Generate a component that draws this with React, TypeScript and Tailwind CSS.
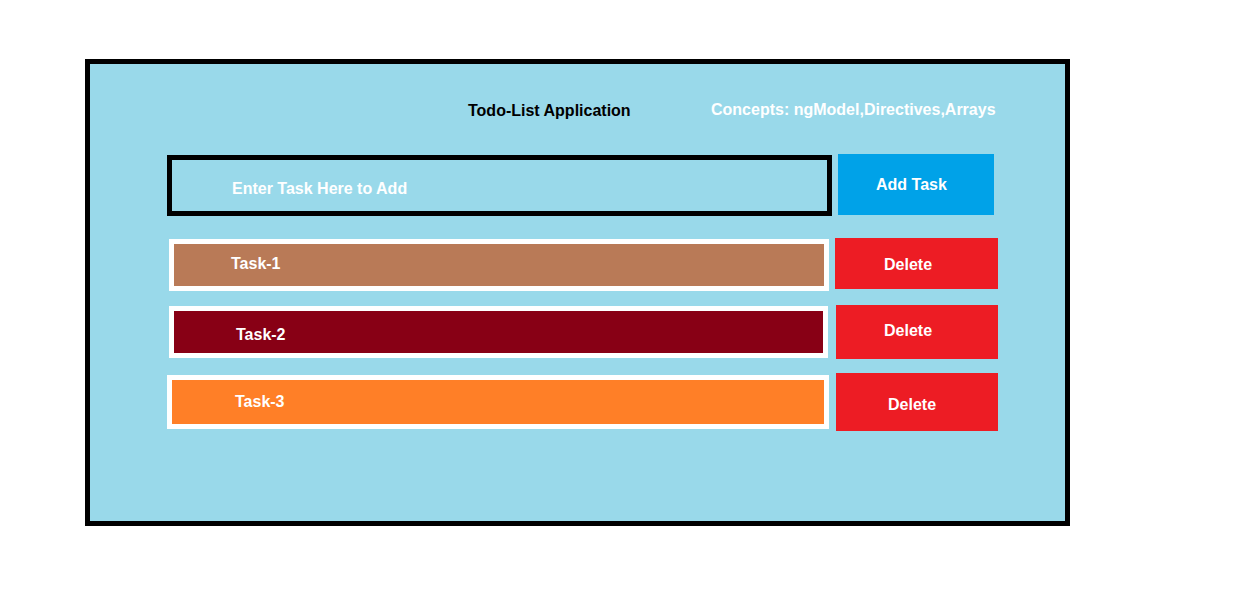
import React from "react";

const font = { fontFamily: '"Liberation Sans", Arial, sans-serif' };

export default function App() {
  return (
    <div className="w-[1252px] h-[608px] bg-white pt-[59px] pl-[85px]" style={font}>
      <div className="w-[985px] h-[467px] border-[5px] border-black bg-[#99D9EA] flex flex-col">
        {/* Header */}
        <div className="mt-[37px] flex items-start h-[18px] text-[16px] leading-[18px] font-bold">
          <span className="ml-[378px] w-[243px] pt-px text-black">Todo-List Application</span>
          <span className="text-white">Concepts: ngModel,Directives,Arrays</span>
        </div>

        {/* Input row */}
        <div className="mt-[35px] flex items-start text-[16px] leading-[18px] font-bold text-white">
          <div className="ml-[77px] mt-px w-[665px] h-[61px] border-[5px] border-black pl-[60px] pt-[20px]">
            Enter Task Here to Add
          </div>
          <button className="ml-[6px] w-[156px] h-[61px] bg-[#00A2E8] text-left pl-[38px] pt-[22px] self-start flex items-start">
            Add Task
          </button>
        </div>

        {/* Task 1 */}
        <div className="mt-[22px] flex items-start text-[16px] leading-[18px] font-bold text-white">
          <div className="ml-[79px] mt-px w-[660px] h-[52px] border-[5px] border-white bg-[#B97A57] pl-[57px] pt-[11px]">
            Task-1
          </div>
          <button className="ml-[6px] w-[163px] h-[51px] bg-[#ED1C24] pl-[49px] pt-[18px] flex items-start">
            Delete
          </button>
        </div>

        {/* Task 2 */}
        <div className="mt-[14px] flex items-start text-[16px] leading-[18px] font-bold text-white">
          <div className="ml-[79px] mt-px w-[659px] h-[52px] border-[5px] border-white bg-[#880015] pl-[62px] pt-[15px]">
            Task-2
          </div>
          <button className="ml-[8px] w-[162px] h-[54px] bg-[#ED1C24] pl-[48px] pt-[17px] flex items-start">
            Delete
          </button>
        </div>

        {/* Task 3 */}
        <div className="mt-[14px] flex items-start text-[16px] leading-[18px] font-bold text-white">
          <div className="ml-[77px] mt-[2px] w-[662px] h-[54px] border-[5px] border-white bg-[#FF7F27] pl-[63px] pt-[13px]">
            Task-3
          </div>
          <button className="ml-[7px] w-[162px] h-[58px] bg-[#ED1C24] pl-[52px] pt-[23px] flex items-start">
            Delete
          </button>
        </div>
      </div>
    </div>
  );
}
